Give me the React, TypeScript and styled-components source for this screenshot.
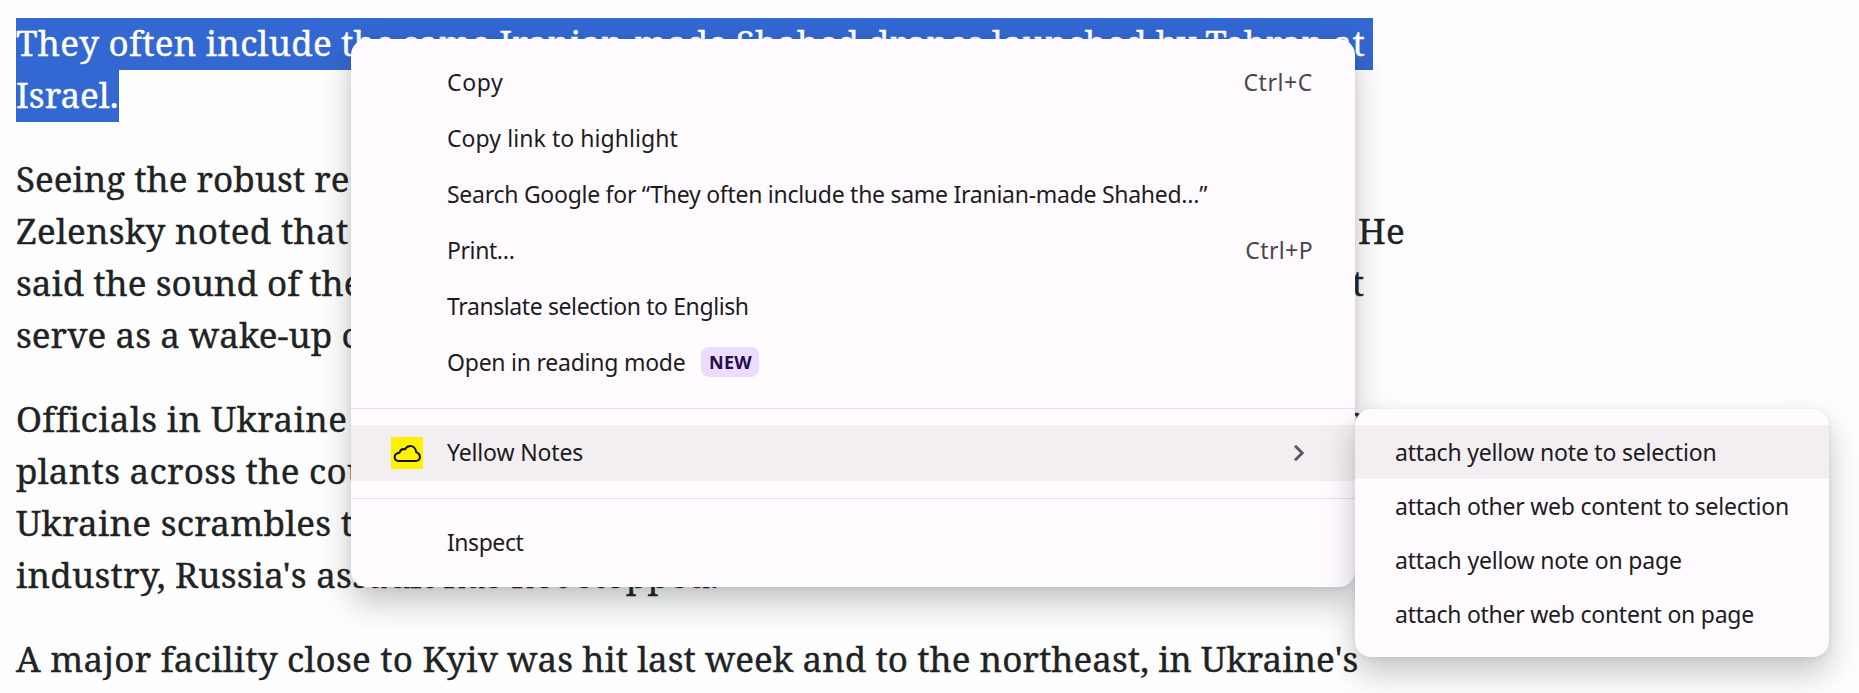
import React from "react";
import styled, { createGlobalStyle } from "styled-components";

const GlobalStyle = createGlobalStyle`
  * { box-sizing: border-box; }
  html, body { margin: 0; background: #fefefe; overflow: hidden; }
`;

const Page = styled.main`
  position: relative;
  width: 1859px;
  height: 693px;
  overflow: hidden;
  padding: 18px 0 0 16px;
`;

const Article = styled.article`
  width: 1400px;
  display: flex;
  flex-direction: column;
  gap: 32px;
  font-family: "Noto Serif", serif;
  font-size: 35px;
  line-height: 50px;
  color: #202224;
  -webkit-text-stroke: 0.35px currentColor;
`;

const Paragraph = styled.p`
  margin: 0;
`;

const Line = styled.span<{ $tracking?: number; $width?: number; $split?: boolean }>`
  display: flex;
  justify-content: ${(p) => (p.$split ? "space-between" : "flex-start")};
  height: 52px;
  width: ${(p) => (p.$width ? `${p.$width}px` : "max-content")};
  letter-spacing: ${(p) => p.$tracking ?? 0}px;
  white-space: pre;
`;

const Words = styled.span<{ $tracking: number }>`
  letter-spacing: ${(p) => p.$tracking}px;
`;

const Selected = styled(Line)`
  background: #3367d1;
  color: #fff;
`;

const Menu = styled.div`
  position: absolute;
  padding: 16px 0;
  border-radius: 16px;
  background: #fffbff;
  box-shadow: 0 16px 32px rgba(30, 36, 38, 0.26), 0 1px 6px rgba(30, 36, 38, 0.08);
  font-family: "Noto Sans", sans-serif;
  font-size: 23px;
  color: #1d1b1f;
`;

const ContextMenu = styled(Menu)`
  left: 351px;
  top: 39px;
  width: 1004px;
`;

const SubMenu = styled(Menu)`
  left: 1355px;
  top: 409px;
  width: 474px;
`;

const Row = styled.div<{ $active?: boolean }>`
  display: flex;
  align-items: center;
  height: 56px;
  padding: 0 42px 2px 40px;
  background: ${(p) => (p.$active ? "#f2eef1" : "transparent")};
`;

const SubRow = styled(Row)`
  height: 54px;
  padding: 0 0 0 40px;
`;

const IconSlot = styled.span`
  display: flex;
  width: 32px;
  height: 32px;
  margin: 2px 24px 0 0;
`;

const Label = styled.span<{ $tracking?: number }>`
  letter-spacing: ${(p) => p.$tracking ?? 0}px;
  line-height: 32px;
  white-space: pre;
`;

const Shortcut = styled(Label)`
  margin-left: auto;
  color: #49454e;
`;

const Badge = styled.span`
  display: flex;
  align-items: center;
  justify-content: center;
  width: 58px;
  height: 30px;
  margin-left: 16px;
  padding-bottom: 1px;
  border-radius: 8px;
  background: #ecdcff;
  color: #270d4d;
  font-size: 18px;
  font-weight: 700;
  line-height: 28px;
  letter-spacing: 0.2px;
`;

const Separator = styled.hr`
  height: 1px;
  margin: 17px 0 16px;
  border: 0;
  background: #ecdcff;
`;

const Chevron = styled.svg`
  margin: 2px 8px 0 auto;
`;

const CloudNote = () => (
  <svg width="32" height="32" viewBox="0 0 32 32">
    <rect width="32" height="32" fill="#fff200" />
    <path
      d="M7.4 23.9H25.2A4.2 4.2 0 0 0 28.9 19.6C28.9 17.6 27.4 16 25.2 15.1C24.8 11.6 22.4 9.1 19.4 9.1C17 9.1 15.2 10.3 14.1 12.3C11.4 11.7 9.2 13.2 8.5 15.8C5.4 16.2 3.7 17.8 3.7 20.1C3.7 22.4 5.2 23.9 7.4 23.9Z"
      fill="none"
      stroke="#111"
      strokeWidth="2"
      strokeLinejoin="round"
    />
  </svg>
);

type Item = {
  label: string;
  tracking: number;
  shortcut?: string;
  shortcutTracking?: number;
  badge?: string;
};

const items: Item[] = [
  { label: "Copy", tracking: 0.6, shortcut: "Ctrl+C", shortcutTracking: 0.6 },
  { label: "Copy link to highlight", tracking: 0.07 },
  { label: "Search Google for “They often include the same Iranian-made Shahed…”", tracking: -0.27 },
  { label: "Print…", tracking: -0.4, shortcut: "Ctrl+P", shortcutTracking: 0.4 },
  { label: "Translate selection to English", tracking: -0.4 },
  { label: "Open in reading mode", tracking: -0.24, badge: "NEW" },
];

const subItems: Item[] = [
  { label: "attach yellow note to selection", tracking: -0.2 },
  { label: "attach other web content to selection", tracking: -0.25 },
  { label: "attach yellow note on page", tracking: -0.18 },
  { label: "attach other web content on page", tracking: -0.25 },
];

export default function App() {
  return (
    <Page>
      <GlobalStyle />
      <Article>
        <Paragraph>
          <Selected $width={1357}>
            <Words $tracking={0.25}>They often include</Words>
            <Words $tracking={-0.05}> the same Iranian-made Shahed drones launched by Tehran at</Words>
          </Selected>
          <Selected $width={103}>Israel.</Selected>
        </Paragraph>
        <Paragraph>
          <Line>Seeing the robust re</Line>
          <Line $width={1389} $split $tracking={0.25}>
            <span>Zelensky noted that</span>
            <span>He</span>
          </Line>
          <Line $width={1348} $split>
            <span>said the sound of the</span>
            <span>t</span>
          </Line>
          <Line $tracking={0.05}>serve as a wake-up c</Line>
        </Paragraph>
        <Paragraph>
          <Line $width={1345} $split $tracking={0.4}>
            <span>Officials in Ukraine</span>
            <span>r</span>
          </Line>
          <Line $tracking={0.25}>plants across the cou</Line>
          <Line $tracking={0.25}>Ukraine scrambles t</Line>
          <Line $tracking={0.25}>industry, Russia's assault has not stopped.</Line>
        </Paragraph>
        <Paragraph>
          <Line>
            <Words $tracking={0.23}>A major facility close to Kyiv</Words>
            <Words $tracking={0.03}> was hit last week and to the northeast, in Ukraine's</Words>
          </Line>
        </Paragraph>
      </Article>
      <ContextMenu>
        {items.map((item) => (
          <Row key={item.label}>
            <IconSlot />
            <Label $tracking={item.tracking}>{item.label}</Label>
            {item.badge && <Badge>{item.badge}</Badge>}
            {item.shortcut && <Shortcut $tracking={item.shortcutTracking}>{item.shortcut}</Shortcut>}
          </Row>
        ))}
        <Separator />
        <Row $active>
          <IconSlot>
            <CloudNote />
          </IconSlot>
          <Label $tracking={-0.15}>Yellow Notes</Label>
          <Chevron width="12" height="18" viewBox="0 0 12 18">
            <path d="M2 1.8 9.2 9 2 16.2" fill="none" stroke="#5c595e" strokeWidth="2.9" />
          </Chevron>
        </Row>
        <Separator />
        <Row>
          <IconSlot />
          <Label $tracking={-0.45}>Inspect</Label>
        </Row>
      </ContextMenu>
      <SubMenu>
        {subItems.map((item, i) => (
          <SubRow key={item.label} $active={i === 0}>
            <Label $tracking={item.tracking}>{item.label}</Label>
          </SubRow>
        ))}
      </SubMenu>
    </Page>
  );
}
